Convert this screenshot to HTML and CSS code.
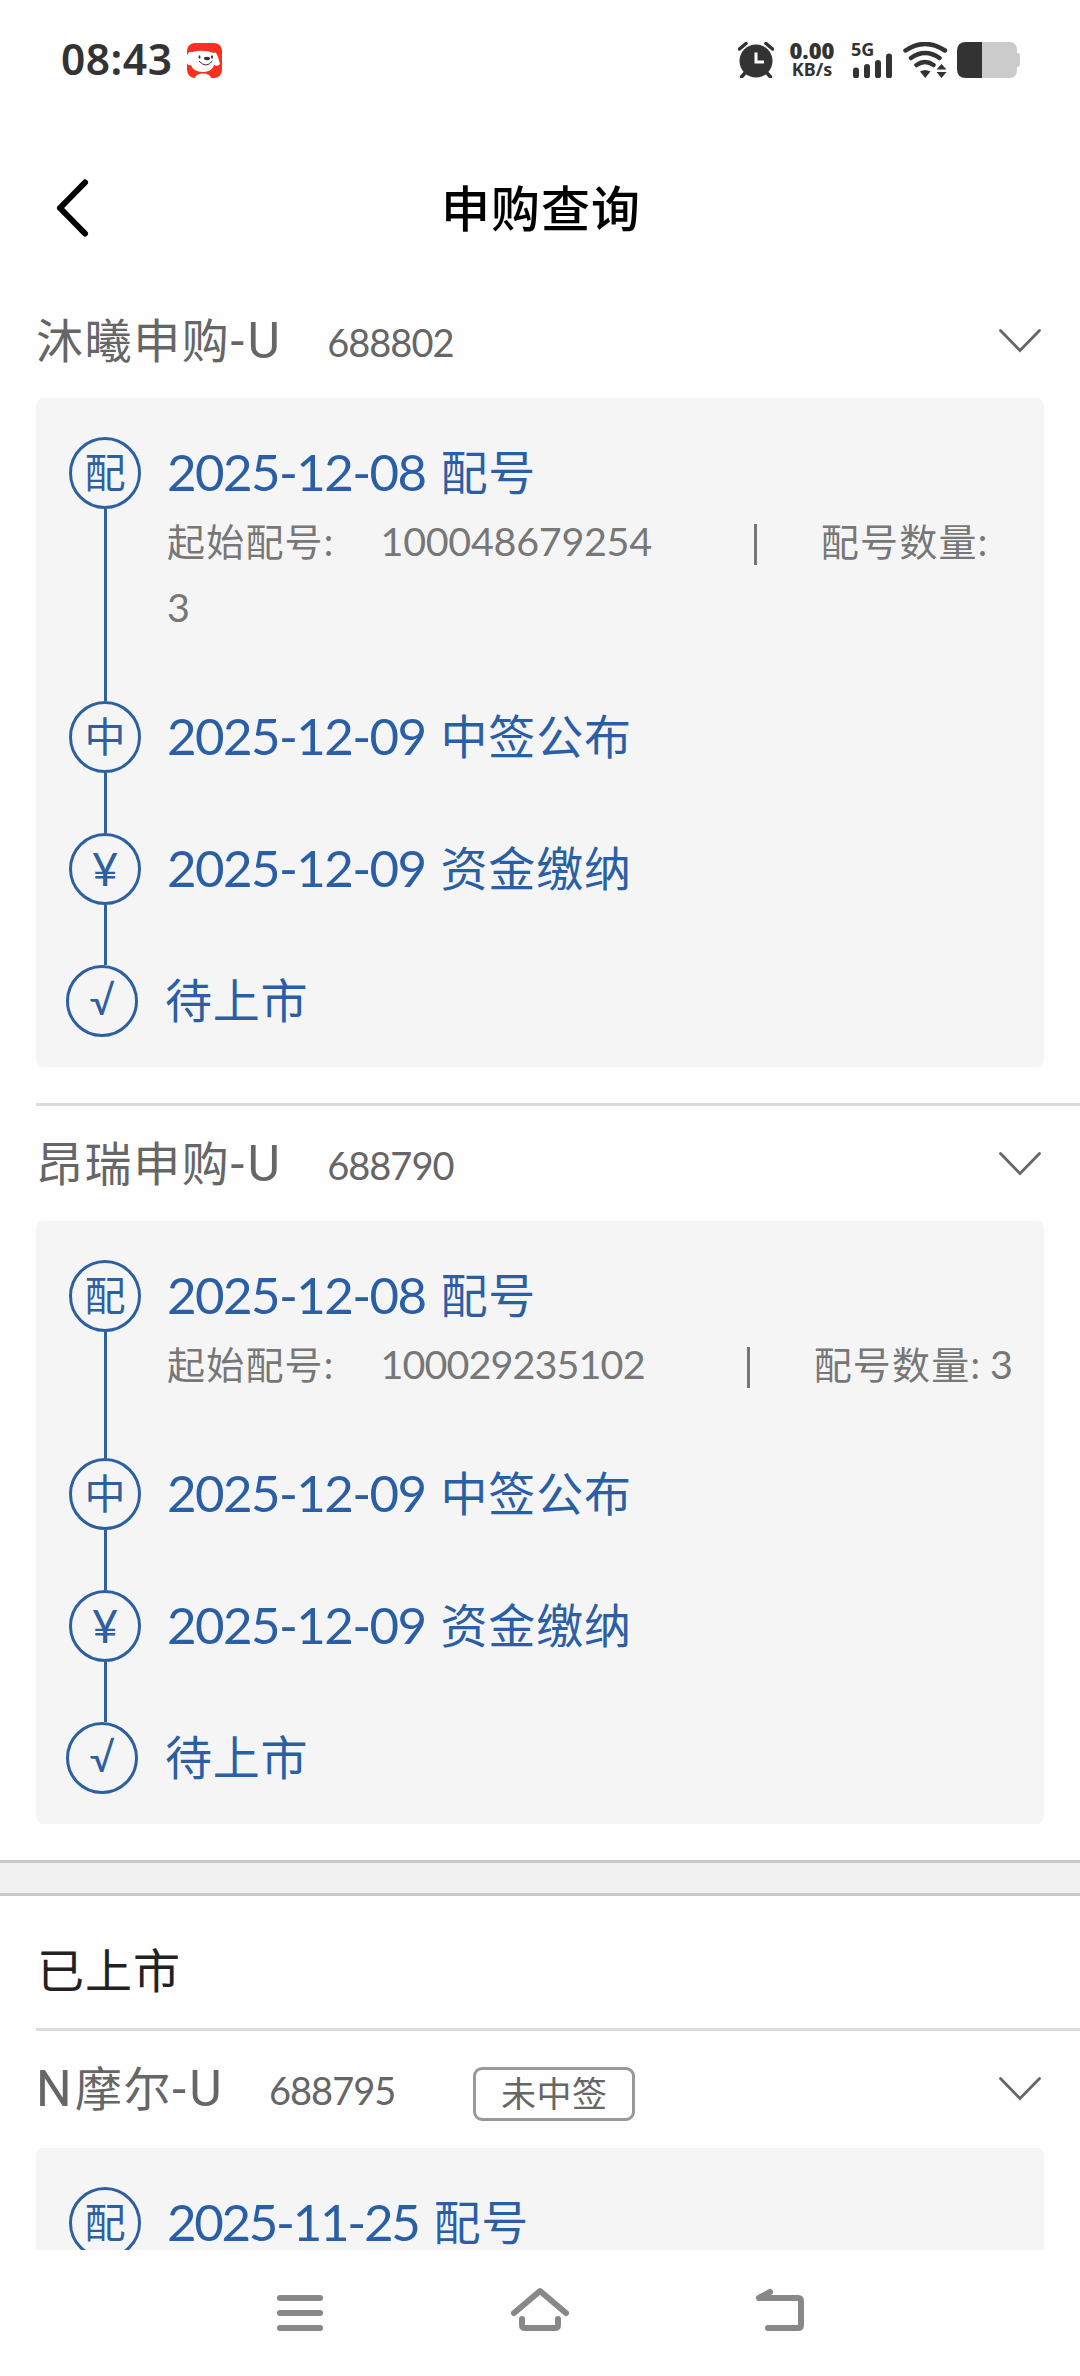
FILE: index.html
```
<!DOCTYPE html>
<html lang="zh-CN">
	<head>
		<meta charset="utf-8">
		<title>申购查询</title>
		<link rel="stylesheet" href="styles.css">
	</head>
	<body>
		<div class="status_bar">
			<span class="time">08:43</span>
			<svg class="app_icon" width="35" height="35" viewBox="0 0 35 35">
				<rect width="35" height="35" rx="8" fill="#f9301b"/>
				<path d="M0 12Q2 8 5 9Q16 6 27 10Q29 8 31 14L33 21Q31 24 27 22Q25 29 16 29Q6 29 4 22Q1 23 0 20Z" fill="#fff"/>
				<path d="M8 35Q9 30.500 16 30.500Q23 30.500 24 35Z" fill="#fff"/>
				<ellipse cx="20" cy="15.500" rx="3" ry="1.700" fill="#333"/>
				<ellipse cx="12.500" cy="14" rx="1" ry="1.700" fill="#333"/>
				<ellipse cx="25" cy="14" rx="1" ry="1.700" fill="#333"/>
				<path d="M12 18Q19 26 25.500 18" fill="none" stroke="#333" stroke-width="1"/>
			</svg>
			<div class="status_right">
				<svg class="alarm" width="36" height="36" viewBox="0 0 36 36">
					<circle cx="18" cy="19" r="16.500" fill="#333"/>
					<path d="M1.500 7L8 1.500M34.500 7L28 1.500M7 31L3.500 35M29 31L32.500 35" stroke="#333" stroke-width="3.500" stroke-linecap="round"/>
					<path d="M18 10.500V20H26" fill="none" stroke="#fff" stroke-width="3"/>
				</svg>
				<div class="speed"><b>0.00</b><i>KB/s</i></div>
				<div class="signal">
					<span>5G</span>
					<svg width="42" height="36" viewBox="0 0 42 36">
						<path d="M5 28.500V33.500M16 25V33.500M27 21V33.500M38 14.500V33.500" stroke="#333" stroke-width="6" stroke-linecap="round"/>
					</svg>
				</div>
				<svg class="wifi" width="45" height="36" viewBox="0 0 45 36">
					<path d="M2.500 8.500Q22 -4.500 42 8.500M8 16Q22 6 36.500 16M13.500 23Q22 17 30.500 23" fill="none" stroke="#333" stroke-width="4.500" stroke-linecap="round"/>
					<path d="M17 29.500Q22 26.500 27.500 29.500L22.200 36ZM33.500 27.500L38.500 22L43.500 27.500ZM33.500 30L38.500 36L43.500 30Z" fill="#333"/>
				</svg>
				<svg class="battery" width="63" height="36" viewBox="0 0 63 36">
					<path d="M25 0H52Q60 0 60 8V11Q63 11 63 14V22Q63 25 60 25V28Q60 36 52 36H25Z" fill="#cbcbcb"/>
					<path d="M25 0H9Q0 0 0 9V27Q0 36 9 36H25Z" fill="#333"/>
				</svg>
			</div>
		</div>

		<div class="title_bar">
			<svg width="34" height="60" viewBox="0 0 34 60">
				<path d="M29 4.500L4 30L29 55.500" fill="none" stroke="#000" stroke-width="6" stroke-linecap="round" stroke-linejoin="round"/>
			</svg>
			<h1>申购查询</h1>
		</div>

		<div class="content">
			<div class="stock">
				<div class="stock_head">
					<span class="name">沐曦申购<em>-U</em></span>
					<span class="code">688802</span>
					<svg class="arrow" width="42" height="24" viewBox="0 0 42 24"><path d="M1.500 1.500L21 21.500L40.500 1.500" fill="none" stroke="#666" stroke-width="2.800" stroke-linecap="round"/></svg>
				</div>
				<div class="card">
					<div class="step">
						<div class="dot">配</div>
						<div class="info">
							<p class="main"><span class="date">2025-12-08</span>配号</p>
							<p class="sub">起始配号:<span class="num">100048679254</span><span class="sep"></span>配号数量: <span class="count">3</span></p>
						</div>
					</div>
					<div class="step">
						<div class="dot">中</div>
						<div class="info"><p class="main"><span class="date">2025-12-09</span>中签公布</p></div>
					</div>
					<div class="step">
						<div class="dot yen">¥</div>
						<div class="info"><p class="main"><span class="date">2025-12-09</span>资金缴纳</p></div>
					</div>
					<div class="step last">
						<div class="dot check">√</div>
						<div class="info"><p class="main">待上市</p></div>
					</div>
				</div>
			</div>

			<div class="line"></div>

			<div class="stock">
				<div class="stock_head">
					<span class="name">昂瑞申购<em>-U</em></span>
					<span class="code">688790</span>
					<svg class="arrow" width="42" height="24" viewBox="0 0 42 24"><path d="M1.500 1.500L21 21.500L40.500 1.500" fill="none" stroke="#666" stroke-width="2.800" stroke-linecap="round"/></svg>
				</div>
				<div class="card">
					<div class="step">
						<div class="dot">配</div>
						<div class="info">
							<p class="main"><span class="date">2025-12-08</span>配号</p>
							<p class="sub">起始配号:<span class="num narrow">100029235102</span><span class="sep"></span>配号数量: <span class="count">3</span></p>
						</div>
					</div>
					<div class="step">
						<div class="dot">中</div>
						<div class="info"><p class="main"><span class="date">2025-12-09</span>中签公布</p></div>
					</div>
					<div class="step">
						<div class="dot yen">¥</div>
						<div class="info"><p class="main"><span class="date">2025-12-09</span>资金缴纳</p></div>
					</div>
					<div class="step last">
						<div class="dot check">√</div>
						<div class="info"><p class="main">待上市</p></div>
					</div>
				</div>
			</div>

			<div class="band"></div>
			<h2>已上市</h2>
			<div class="line no_gap"></div>

			<div class="stock">
				<div class="stock_head tall">
					<span class="name"><em>N</em>摩尔<em>-U</em></span>
					<span class="code">688795</span>
					<span class="tag">未中签</span>
					<svg class="arrow" width="42" height="24" viewBox="0 0 42 24"><path d="M1.500 1.500L21 21.500L40.500 1.500" fill="none" stroke="#666" stroke-width="2.800" stroke-linecap="round"/></svg>
				</div>
				<div class="card">
					<div class="step">
						<div class="dot">配</div>
						<div class="info"><p class="main"><span class="date short">2025-11-25</span>配号</p></div>
					</div>
				</div>
			</div>
		</div>

		<div class="nav_bar">
			<svg width="60" height="48" viewBox="0 0 60 48">
				<path d="M10 13H50M10 28H50M10 43H50" stroke="#888" stroke-width="6" stroke-linecap="round"/>
			</svg>
			<svg width="60" height="48" viewBox="0 0 60 48">
				<path d="M4 28L30 6L56 28" fill="none" stroke="#888" stroke-width="6" stroke-linecap="round" stroke-linejoin="round"/>
				<path d="M12 34V40Q12 43 15.500 43H44.500Q48 43 48 40V34" fill="none" stroke="#888" stroke-width="6" stroke-linecap="round"/>
			</svg>
			<svg width="60" height="48" viewBox="0 0 60 48">
				<path d="M20 7L9 13H48Q51 13 51 16V40Q51 43 48 43H18" fill="none" stroke="#888" stroke-width="6" stroke-linecap="round" stroke-linejoin="round"/>
			</svg>
		</div>
	</body>
</html>
```

FILE: styles.css
```
* { box-sizing: border-box; }

body { background-color: #fefefe; color: #666; display: flex; flex-direction: column; font-family: Lato, "Noto Sans CJK SC", sans-serif; height: 2376px; margin: 0; overflow: hidden; }

h1, h2, p { font-weight: normal; margin: 0; }

em, i { font-style: normal; }

svg { display: block; flex: none; }

/* status bar */
.status_bar { align-items: center; color: #333; display: flex; flex: none; height: 120px; padding: 0 60px; }

.time { font-family: "Noto Sans", sans-serif; font-size: 42.5px; font-weight: 600; height: 60px; letter-spacing: 0.5px; line-height: 58px; padding-left: 1px; width: 127px; }

.status_right { display: flex; margin-left: auto; }

.speed { display: flex; flex-direction: column; font-family: "Noto Sans", sans-serif; font-weight: bold; height: 36px; margin-left: 14px; text-align: center; width: 48px; }

.speed b { font-size: 22px; line-height: 16px; }

.speed i { font-size: 18px; line-height: 22px; }

.signal { height: 36px; margin-left: 15px; position: relative; width: 42px; }

.signal span { font: bold 18px "Noto Sans", sans-serif; left: 0; line-height: 14px; position: absolute; top: 0; }

.wifi { margin-left: 10px; }

.battery { margin-left: 9px; }

/* title bar */
.title_bar { align-items: center; display: flex; flex: none; height: 176px; padding: 0 56px; }

.title_bar h1 { color: #000; flex: 1; font-size: 49px; font-weight: 500; letter-spacing: 1px; line-height: 70px; padding-right: 32px; text-align: center; }

/* list */
.content { flex: 1; min-height: 0; overflow: hidden; }

.content > .stock:first-child { margin-top: -13px; }

.stock { padding: 0 36px; }

.stock_head { align-items: flex-start; display: flex; height: 115px; padding-top: 22px; }

.stock_head.tall { height: 117px; }

.name { flex: none; font-size: 47px; letter-spacing: 1.6px; line-height: 70px; }

.name em { font-family: Roboto, sans-serif; font-size: 50px; letter-spacing: 3.3px; line-height: 1; }

.code { flex: none; font-size: 38px; letter-spacing: -1px; line-height: 70px; margin: 2px 0 0 44px; }

.tag { border: 3px solid #999; border-radius: 9px; font-size: 35px; height: 54px; letter-spacing: 0.5px; line-height: 47px; margin: 14px 0 0 78px; text-align: center; width: 162px; }

.arrow { margin: 24px 3px 0 auto; }

.card { background-color: #f5f5f5; border-radius: 8px; padding: 39px 0 30px 33px; }

.step { display: flex; padding-bottom: 60px; position: relative; }

.step::before { background-color: #2e5f9f; bottom: 0; content: ""; left: 35px; position: absolute; top: 72px; width: 3px; }

.step.last { margin-left: -3px; padding-bottom: 0; }

.step.last::before { display: none; }

.dot { border: 3px solid #2e5f9f; border-radius: 50%; color: #2e5f9f; flex: none; font-size: 41px; height: 72px; line-height: 65px; text-align: center; width: 72px; }

.dot.yen { font-size: 46px; }

.dot.check { font-size: 40px; }

.info { flex: 1; padding-left: 26px; }

.main { color: #2b5fa5; font-size: 47px; height: 72px; letter-spacing: 0.8px; line-height: 70px; white-space: nowrap; }

.last .main { padding-left: 1px; }

.date { font-size: 51px; letter-spacing: -1.6px; line-height: 1; margin-right: 15px; position: relative; top: 1px; }

.date.short { letter-spacing: -2.3px; }

.sub { color: #777; font-size: 38px; letter-spacing: 1.2px; line-height: 66px; padding-right: 27px; position: relative; top: -1px; word-spacing: -2px; }

.num { font-size: 39.5px; letter-spacing: -0.3px; line-height: 1; margin-left: 46px; }

.num.narrow { letter-spacing: -0.9px; }

.count { font-size: 39.5px; letter-spacing: 0; line-height: 1; }

.sep { background-color: #777; display: inline-block; height: 41px; margin: 0 64px 0 102px; vertical-align: -9px; width: 3px; }

.line { background-color: #dcdcdc; height: 3px; margin: 36px 0 0 36px; }

.line.no_gap { margin-top: 0; }

.band { background-color: #f1f1f1; border: solid #c9c9c9; border-width: 3px 0; height: 36px; margin-top: 36px; }

h2 { color: #222; font-size: 47px; height: 132px; letter-spacing: 1px; line-height: 148px; padding-left: 37px; }

/* navigation keys */
.nav_bar { display: flex; flex: none; gap: 180px; height: 126px; justify-content: center; padding-top: 35px; }
```
